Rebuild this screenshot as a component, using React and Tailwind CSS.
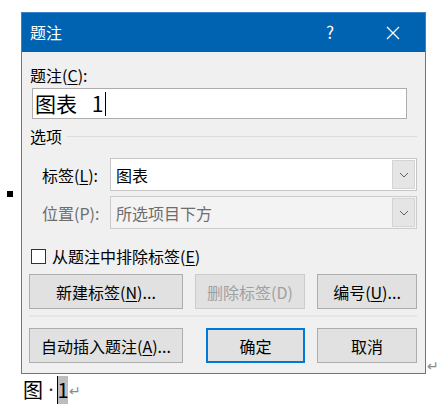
import React from "react";

function Chevron({ color = "#606060" }) {
  return (
    <svg width="10" height="6" viewBox="0 0 10 6">
      <polyline points="1,1 5,5 9,1" fill="none" stroke={color} strokeWidth="1" />
    </svg>
  );
}

function Btn({ w, children, disabled, primary, ml }) {
  return (
    <div
      className={
        "h-[35px] flex items-center justify-center bg-[#e1e1e1] border " +
        (primary
          ? "border-[#0078d7] shadow-[inset_0_0_0_1px_#0078d7] "
          : disabled
          ? "border-[#cccccc] text-[#a0a0a0] "
          : "border-[#adadad] ")
      }
      style={{ width: w, marginLeft: ml }}
    >
      {children}
    </div>
  );
}

export default function App() {
  return (
    <div className="w-[440px] h-[409px] bg-white overflow-hidden font-['Noto_Sans_CJK_SC','Noto_Sans',sans-serif] text-[16px] text-black leading-[22px]">
      <div className="flex pt-[12px]">
        <div className="w-[21px] shrink-0">
          <div className="ml-[7px] mt-[179px] w-[6px] h-[6px] bg-black" />
        </div>
        <div className="w-[405px] shrink-0 border border-[#3a83cb] flex flex-col">
          {/* title bar */}
          <div className="h-[39px] bg-[#0063b1] text-white flex items-center">
            <div className="pl-[8px] flex-1 text-[16px] -mt-[1px]">题注</div>
            <div className="w-[20px] text-center text-[17px] mr-[46px] -mt-[1px]">?</div>
            <div className="mr-[25px] flex items-center">
              <svg width="14" height="14" viewBox="0 0 14 14">
                <path d="M1 1 L13 13 M13 1 L1 13" stroke="white" strokeWidth="1.3" fill="none" />
              </svg>
            </div>
          </div>
          {/* body */}
          <div className="bg-[#f0f0f0] flex flex-col pt-[12px] pb-[10px]">
            <div className="pl-[8px] h-[22px]">
              题注(<span className="underline underline-offset-2">C</span>):
            </div>
            <div className="mt-[2px] ml-[10px] w-[375px] h-[31px] bg-white border border-[#adadad] flex items-center pl-[2px]">
              <span className="text-[21px] leading-[29px] whitespace-pre [word-spacing:10px]">图表 1</span>
              <span className="ml-[2px] w-px h-[24px] bg-black" />
            </div>
            <div className="mt-[6px] h-[22px] flex items-center pl-[8px] pr-[8px]">
              <span>选项</span>
              <div className="flex-1 h-px bg-[#dcdcdc] ml-[5px]" />
            </div>
            <div className="mt-[11px] h-[33px] flex items-center pl-[20px]">
              <div className="w-[68px]">
                标签(<span className="underline underline-offset-2">L</span>):
              </div>
              <div className="w-[307px] h-[33px] bg-white border border-[#c6c6c6] flex items-stretch">
                <div className="flex-1 flex items-center pl-[5px]">图表</div>
                <div className="w-[23px] my-[1px] mr-[1px] bg-[#e5e5e5] border border-[#d4d4d4] flex items-center justify-center">
                  <Chevron />
                </div>
              </div>
            </div>
            <div className="mt-[5px] h-[33px] flex items-center pl-[20px] text-[#6d6d6d]">
              <div className="w-[68px]">位置(P):</div>
              <div className="w-[307px] h-[33px] bg-[#f3f3f3] border border-[#cccccc] flex items-stretch">
                <div className="flex-1 flex items-center pl-[5px]">所选项目下方</div>
                <div className="w-[23px] my-[1px] mr-[1px] bg-[#e5e5e5] border border-[#d4d4d4] flex items-center justify-center">
                  <Chevron />
                </div>
              </div>
            </div>
            <div className="mt-[16px] h-[22px] flex items-center pl-[9px]">
              <div className="w-[15px] h-[15px] bg-white border border-[#333333]" />
              <span className="ml-[6px]">
                从题注中排除标签(<span className="underline underline-offset-2">E</span>)
              </span>
            </div>
            <div className="mt-[7px] flex pl-[7px] gap-[12px]">
              <Btn w={154}>
                新建标签(<span className="underline underline-offset-2">N</span>)...
              </Btn>
              <Btn w={110} disabled>
                删除标签(D)
              </Btn>
              <Btn w={100}>
                编号(<span className="underline underline-offset-2">U</span>)...
              </Btn>
            </div>
            <div className="mt-[6px] ml-[7px] w-[388px] h-[2px] bg-[#e6e6e6]" />
            <div className="mt-[11px] flex pl-[7px]">
              <Btn w={154}>
                自动插入题注(<span className="underline underline-offset-2">A</span>)...
              </Btn>
              <Btn w={99} primary ml={23}>
                确定
              </Btn>
              <Btn w={100} ml={12}>取消</Btn>
            </div>
          </div>
        </div>
        <div className="self-end text-[#8a8a8a] text-[14px] leading-[14px] ml-[1px] mb-[2px]">↵</div>
      </div>
      <div className="flex items-center pl-[23px] h-[29px] mt-[1px]">
        <span className="text-[20px] leading-[28px]">图</span>
        <span className="text-[12px] text-[#333] ml-[2px] w-[12px]">·</span>
        <span className="w-px h-[28px] bg-black" />
        <span className="h-[28px] w-[10px] bg-[#bdbdbd] text-[20px] leading-[28px] flex justify-center">1</span>
        <span className="text-[#8a8a8a] text-[14px] leading-[14px] ml-[1px]">↵</span>
      </div>
    </div>
  );
}
